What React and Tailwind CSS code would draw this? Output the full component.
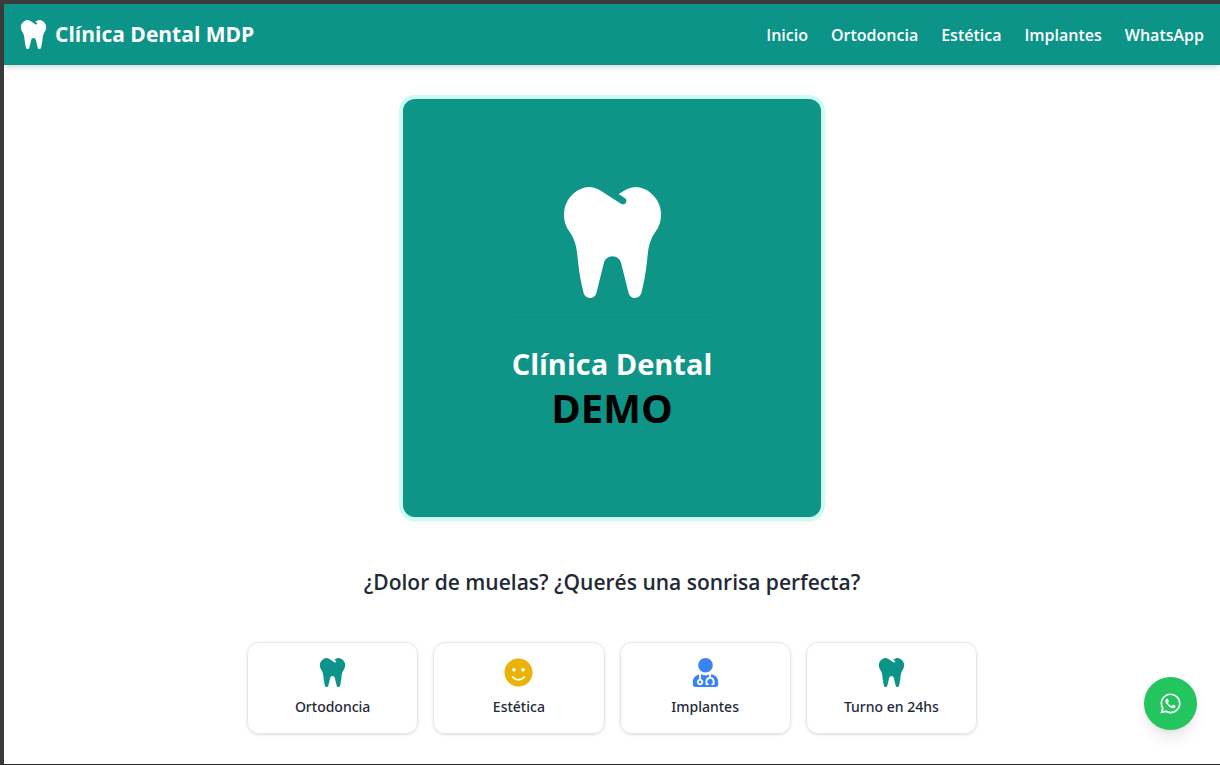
import { FaTooth, FaSmile, FaUserMd, FaWhatsapp } from "react-icons/fa";

const links = [
  { label: "Inicio", href: "#inicio" },
  { label: "Ortodoncia", href: "#ortodoncia" },
  { label: "Estética", href: "#estetica" },
  { label: "Implantes", href: "#implantes" },
  { label: "WhatsApp", href: "#whatsapp" },
];

const services = [
  { label: "Ortodoncia", Icon: FaTooth, color: "text-[#0d9488]" },
  { label: "Estética", Icon: FaSmile, color: "text-[#eab308]" },
  { label: "Implantes", Icon: FaUserMd, color: "text-[#3b82f6]" },
  { label: "Turno en 24hs", Icon: FaTooth, color: "text-[#0d9488]" },
];

function Header() {
  return (
    <header className="flex h-[61px] items-center justify-between bg-[#0d9488] px-4 text-white shadow-md">
      <a href="#inicio" className="flex items-center gap-2 text-[21px] font-bold">
        <FaTooth className="h-[29px] w-[27px]" aria-hidden="true" />
        <span>Clínica Dental MDP</span>
      </a>
      <nav className="flex gap-[23px] text-[16px] font-semibold">
        {links.map((l) => (
          <a key={l.label} href={l.href}>{l.label}</a>
        ))}
      </nav>
    </header>
  );
}

function Banner() {
  return (
    <div className="flex aspect-square w-full max-w-[418px] flex-col items-center rounded-xl bg-[#0f9488] pt-[88px] shadow-md ring-4 ring-[#ccfbf1]">
      <FaTooth className="size-[111px] text-white" aria-hidden="true" />
      <p className="mt-[19px] w-[208px] border-t border-[#0e8f83] pt-[26px] text-center text-[29px] leading-[40px] font-bold whitespace-nowrap text-white">
        Clínica Dental
      </p>
      <p className="text-[40px] leading-[48px] font-bold text-black">DEMO</p>
    </div>
  );
}

export default function App() {
  return (
    <div className="flex min-h-screen flex-col border-t-4 border-b border-l-4 border-t-[#3b3b3b] border-b-[#26262b] border-l-[#3b3b3b] bg-white font-['Open_Sans','Noto_Sans',sans-serif] text-[#1f2937]">
      <Header />
      <main className="flex flex-col items-center px-4 pt-[34px] pb-[30px]">
        <Banner />
        <h1 className="mt-[49px] text-[21px] leading-[32px] font-semibold">
          ¿Dolor de muelas? ¿Querés una sonrisa perfecta?
        </h1>
        <div className="mt-[44px] grid w-full max-w-[730px] grid-cols-4 gap-[15px]">
          {services.map(({ label, Icon, color }) => (
            <a key={label} href="#turnos" className="flex h-[92px] flex-col items-center rounded-xl border border-gray-200 pt-[15px] shadow-sm">
              <Icon className={"size-[29px] " + color} aria-hidden="true" />
              <span className="mt-[9px] font-['Noto_Sans','Open_Sans',sans-serif] text-[14px] leading-[22px] font-medium">{label}</span>
            </a>
          ))}
        </div>
      </main>
      <a href="#whatsapp" aria-label="WhatsApp" className="fixed right-[23px] bottom-[35px] flex size-[53px] items-center justify-center rounded-full bg-[#22c55e] text-white shadow-lg">
        <FaWhatsapp className="size-[23px]" aria-hidden="true" />
      </a>
    </div>
  );
}
